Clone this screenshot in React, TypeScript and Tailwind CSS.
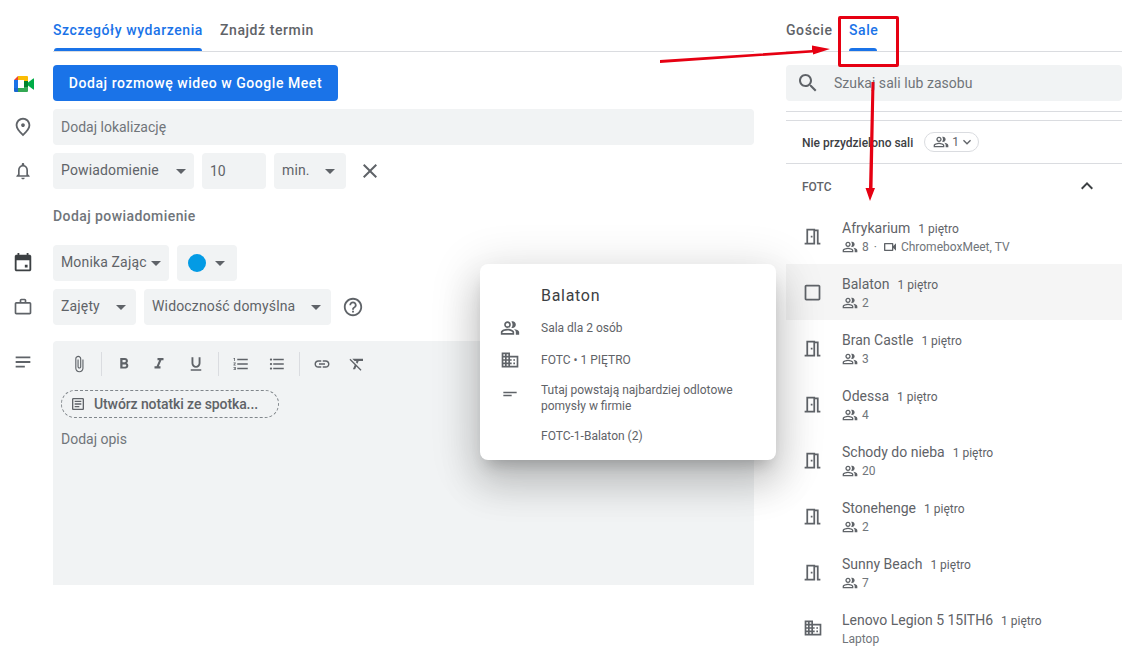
import type { ReactNode } from 'react'

function Icon({ d, className = 'w-6 h-6 fill-[#5f6368]' }: { d: string; className?: string }) {
  return (
    <svg viewBox="0 0 24 24" className={className}>
      <path d={d} />
    </svg>
  )
}

const place = 'M12 12c-1.1 0-2-.9-2-2s.9-2 2-2 2 .9 2 2-.9 2-2 2zm6-1.8C18 6.57 15.35 4 12 4s-6 2.57-6 6.2c0 2.34 1.95 5.44 6 9.14 4.05-3.7 6-6.8 6-9.14zM12 2c4.2 0 8 3.22 8 8.2 0 3.32-2.67 7.25-8 11.8-5.33-4.55-8-8.48-8-11.8C4 5.22 7.8 2 12 2z'
const bell = 'M12 22c1.1 0 2-.9 2-2h-4c0 1.1.9 2 2 2zm6-6v-5c0-3.07-1.63-5.64-4.5-6.32V4c0-.83-.67-1.5-1.5-1.5s-1.5.67-1.5 1.5v.68C7.64 5.36 6 7.92 6 11v5l-2 2v1h16v-1l-2-2zm-2 1H8v-6c0-2.48 1.51-4.5 4-4.5s4 2.02 4 4.5v6z'
const calendar = 'M16 1v2H8V1H6v2H5c-1.11 0-1.99.9-1.99 2L3 19c0 1.1.89 2 2 2h14c1.1 0 2-.9 2-2V5c0-1.1-.9-2-2-2h-1V1h-2zm3 18H5V9h14v10zM14 14h3v3h-3z'
const work = 'M14 6V4h-4v2h4zM4 8v11h16V8H4zm16-2c1.11 0 2 .89 2 2v11c0 1.11-.89 2-2 2H4c-1.11 0-2-.89-2-2l.01-11c0-1.11.88-2 1.99-2h4V4c0-1.11.89-2 2-2h4c1.11 0 2 .89 2 2v2h4z'
const subject = 'M4 6h16v2H4zm0 5h16v2H4zm0 5h10v2H4z'
const help = 'M11 18h2v-2h-2v2zm1-16C6.48 2 2 6.48 2 12s4.48 10 10 10 10-4.48 10-10S17.52 2 12 2zm0 18c-4.41 0-8-3.59-8-8s3.59-8 8-8 8 3.59 8 8-3.59 8-8 8zm0-14c-2.21 0-4 1.79-4 4h2c0-1.1.9-2 2-2s2 .9 2 2c0 2-3 1.75-3 5h2c0-2.25 3-2.5 3-5 0-2.21-1.79-4-4-4z'
const close = 'M19 6.41L17.59 5 12 10.59 6.41 5 5 6.41 10.59 12 5 17.59 6.41 19 12 13.41 17.59 19 19 17.59 13.41 12z'
const attach = 'M16.5 6v11.5c0 2.21-1.79 4-4 4s-4-1.79-4-4V5c0-1.38 1.12-2.5 2.5-2.5s2.5 1.12 2.5 2.5v10.5c0 .55-.45 1-1 1s-1-.45-1-1V6H10v9.5c0 1.38 1.12 2.5 2.5 2.5s2.5-1.12 2.5-2.5V5c0-2.21-1.79-4-4-4S7 2.79 7 5v12.5c0 3.04 2.46 5.5 5.5 5.5s5.5-2.46 5.5-5.5V6h-1.5z'
const bold = 'M15.6 10.79c.97-.67 1.65-1.77 1.65-2.79 0-2.26-1.75-4-4-4H7v14h7.04c2.09 0 3.71-1.7 3.71-3.79 0-1.52-.86-2.82-2.15-3.42zM10 6.5h3c.83 0 1.5.67 1.5 1.5s-.67 1.5-1.5 1.5h-3v-3zm3.5 9H10v-3h3.5c.83 0 1.5.67 1.5 1.5s-.67 1.5-1.5 1.5z'
const italic = 'M10 4v3h2.21l-3.42 8H6v3h8v-3h-2.21l3.42-8H18V4z'
const underline = 'M12 17c3.31 0 6-2.69 6-6V3h-2.5v8c0 1.93-1.57 3.5-3.5 3.5S8.5 12.93 8.5 11V3H6v8c0 3.31 2.69 6 6 6zm-7 2v2h14v-2H5z'
const numbered = 'M2 17h2v.5H3v1h1v.5H2v1h3v-4H2v1zm1-9h1V4H2v1h1v3zm-1 3h1.8L2 13.1v.9h3v-1H3.2L5 10.9V10H2v1zm5-6v2h14V5H7zm0 14h14v-2H7v2zm0-6h14v-2H7v2z'
const bulleted = 'M4 10.5c-.83 0-1.5.67-1.5 1.5s.67 1.5 1.5 1.5 1.5-.67 1.5-1.5-.67-1.5-1.5-1.5zm0-6c-.83 0-1.5.67-1.5 1.5S3.17 7.5 4 7.5 5.5 6.83 5.5 6 4.83 4.5 4 4.5zm0 12c-.83 0-1.5.68-1.5 1.5s.68 1.5 1.5 1.5 1.5-.68 1.5-1.5-.67-1.5-1.5-1.5zM7 19h14v-2H7v2zm0-6h14v-2H7v2zm0-8v2h14V5H7z'
const link = 'M3.9 12c0-1.71 1.39-3.1 3.1-3.1h4V7H7c-2.76 0-5 2.24-5 5s2.24 5 5 5h4v-1.9H7c-1.71 0-3.1-1.39-3.1-3.1zM8 13h8v-2H8v2zm9-6h-4v1.9h4c1.71 0 3.1 1.39 3.1 3.1s-1.39 3.1-3.1 3.1h-4V17h4c2.76 0 5-2.24 5-5s-2.24-5-5-5z'
const clear = 'M3.27 5L2 6.27l6.97 6.97L6.5 19h3l1.57-3.66L16.73 21 18 19.73 3.55 5.27 3.27 5zM6 5v.18L8.82 8h2.4l-.72 1.68 2.1 2.1L14.21 8H20V5H6z'
const search = 'M15.5 14h-.79l-.28-.27C15.41 12.59 16 11.11 16 9.5 16 5.91 13.09 3 9.5 3S3 5.91 3 9.5 5.91 16 9.5 16c1.61 0 3.09-.59 4.23-1.57l.27.28v.79l5 4.99L20.49 19l-4.99-5zm-6 0C7.01 14 5 11.99 5 9.5S7.01 5 9.5 5 14 7.01 14 9.5 11.99 14 9.5 14z'
const people = 'M16.67 13.13C18.04 14.06 19 15.32 19 17v3h4v-3c0-2.18-3.57-3.47-6.33-3.87zM15 12c2.21 0 4-1.79 4-4s-1.79-4-4-4c-.47 0-.91.1-1.33.24C14.5 5.27 15 6.58 15 8s-.5 2.73-1.33 3.76c.42.14.86.24 1.33.24zM9 12c2.21 0 4-1.79 4-4s-1.79-4-4-4-4 1.79-4 4 1.79 4 4 4zm0-6c1.1 0 2 .9 2 2s-.9 2-2 2-2-.9-2-2 .9-2 2-2zm0 7c-2.67 0-8 1.34-8 4v3h16v-3c0-2.66-5.33-4-8-4zm6 5H3v-.99C3.2 16.29 6.3 15 9 15s5.8 1.29 6 2z'
const domain = 'M12 7V3H2v18h20V7H12zM6 19H4v-2h2v2zm0-4H4v-2h2v2zm0-4H4V9h2v2zm0-4H4V5h2v2zm4 12H8v-2h2v2zm0-4H8v-2h2v2zm0-4H8V9h2v2zm0-4H8V5h2v2zm10 12h-8v-2h2v-2h-2v-2h2v-2h-2V9h8v10zm-2-8h-2v2h2v-2zm0 4h-2v2h2v-2z'
const door = 'M19 19V4h-4V3H5v16H3v2h12V6h2v15h4v-2h-2zm-6 0H7V5h6v14zm-3-8h2v2h-2z'
const video = 'M15 8v8H5V8h10m1-2H4c-.55 0-1 .45-1 1v10c0 .55.45 1 1 1h12c.55 0 1-.45 1-1v-3.5l4 4v-11l-4 4V7c0-.55-.45-1-1-1z'
const square = 'M19 3H5c-1.1 0-2 .9-2 2v14c0 1.1.9 2 2 2h14c1.1 0 2-.9 2-2V5c0-1.1-.9-2-2-2zm0 16H5V5h14v14z'
const expandLess = 'M12 8l-6 6 1.41 1.41L12 10.83l4.59 4.58L18 14z'
const expandMore = 'M16.59 8.59L12 13.17 7.41 8.59 6 10l6 6 6-6z'
const article = 'M19 5v14H5V5h14m0-2H5c-1.1 0-2 .9-2 2v14c0 1.1.9 2 2 2h14c1.1 0 2-.9 2-2V5c0-1.1-.9-2-2-2zM14 17H7v-2h7v2zm3-4H7v-2h10v2zm0-4H7V7h10v2z'

function MeetLogo() {
  return (
    <svg viewBox="0 0 20 16" className="w-[20px] h-[16px]">
      <path d="M4 0h9a1 1 0 0 1 1 1v4h-4V4H4z" fill="#fbbc04" />
      <path d="M4 0v4H0z" fill="#ea4335" />
      <path d="M0 4h4v8H0z" fill="#1a73e8" />
      <path d="M0 12h4v4H1a1 1 0 0 1-1-1z" fill="#1967d2" />
      <path d="M4 12h6v-1h4v4a1 1 0 0 1-1 1H4z" fill="#34a853" />
      <path d="M10 5h4v6h-4z" fill="#00832d" />
      <path d="M14 6.5L19.3 2.4a.45.45 0 0 1 .7.4v10.4a.45.45 0 0 1-.7.4L14 9.5z" fill="#00ac47" />
    </svg>
  )
}

function Caret() {
  return <span className="w-0 h-0 border-x-[5px] border-x-transparent border-t-[5px] border-t-[#5f6368]" />
}

function Select({ label, className }: { label: ReactNode; className: string }) {
  return (
    <div className={`h-9 bg-[#f1f3f4] rounded flex items-center justify-between pl-2 text-[14px] tracking-[.15px] text-[#5f6368] ${className}`}>
      <span className="pb-[2px]">{label}</span>
      <Caret />
    </div>
  )
}

function FormRow({ icon, children, className = '' }: { icon: ReactNode; children: ReactNode; className?: string }) {
  return (
    <div className={`flex items-center ${className}`}>
      <div className="w-[53px] pl-[11px] shrink-0 flex items-center">{icon}</div>
      {children}
    </div>
  )
}

function Capacity({ n }: { n: string }) {
  return (
    <>
      <Icon d={people} className="w-4 h-4 fill-[#5f6368]" />
      <span className="ml-1">{n}</span>
    </>
  )
}

const rooms = [
  { name: 'Afrykarium', n: '8', extra: true },
  { name: 'Balaton', n: '2', hover: true },
  { name: 'Bran Castle', n: '3' },
  { name: 'Odessa', n: '4' },
  { name: 'Schody do nieba', n: '20' },
  { name: 'Stonehenge', n: '2' },
  { name: 'Sunny Beach', n: '7' },
]

function RoomRow({ name, icon, children, hover }: { name: string; icon: ReactNode; children: ReactNode; hover?: boolean }) {
  return (
    <div className={`h-14 flex items-center pl-[15px] ${hover ? 'bg-[#f5f5f5]' : ''}`}>
      <div className="w-[41px] shrink-0 pl-[1px]">{icon}</div>
      <div className="pt-[2px]">
        <div className="flex items-baseline h-[20px] text-[14px] text-[#5f6368]">
          {name}
          <span className="ml-[8px] text-[12px]">1 piętro</span>
        </div>
        <div className="flex items-center h-[18px] text-[12px] text-[#70757a]">{children}</div>
      </div>
    </div>
  )
}

function ToolIcon({ d }: { d: string }) {
  return <Icon d={d} className="w-[18px] h-[18px] fill-[#5f6368]" />
}

function ToolDivider() {
  return <span className="w-px h-6 bg-[#dadce0] mx-[13px]" />
}

export default function App() {
  return (
    <div className="relative w-[1142px] h-[662px] overflow-hidden bg-white font-['Roboto',sans-serif]">
      <div className="flex">
        <div className="w-[754px] shrink-0">
          <div className="h-[52px] ml-[53px] border-b border-[#dadce0] flex gap-[17px] text-[14px] font-medium tracking-[.58px]">
            <div className="relative pt-[20px] w-[150px] whitespace-nowrap text-[#1a73e8]">
              Szczegóły wydarzenia
              <span className="absolute left-[1px] right-[1px] bottom-0 h-[3px] rounded-t-[3px] bg-[#1a73e8]" />
            </div>
            <div className="pt-[20px] text-[#5f6368]">Znajdź termin</div>
          </div>

          <FormRow icon={<span className="ml-[3px] pt-[1px]"><MeetLogo /></span>} className="mt-[13px]">
            <div className="w-[285px] h-9 rounded bg-[#1a73e8] text-white text-[14px] font-medium tracking-[.55px] flex items-center justify-center">
              Dodaj rozmowę wideo w Google Meet
            </div>
          </FormRow>
          <FormRow icon={<Icon d={place} className="w-[22px] h-[22px] ml-[1px] fill-[#5f6368]" />} className="mt-2">
            <div className="flex-1 h-9 rounded bg-[#f1f3f4] flex items-center px-2 text-[14px] text-[#70757a]">
              Dodaj lokalizację
            </div>
          </FormRow>
          <FormRow icon={<Icon d={bell} className="w-5 h-5 ml-[2px] fill-[#5f6368]" />} className="mt-2">
            <div className="flex gap-2 items-center">
              <Select label="Powiadomienie" className="w-[141px] pr-[8px]" />
              <div className="w-16 h-9 rounded bg-[#f1f3f4] flex items-center px-2 text-[14px] text-[#5f6368]">10</div>
              <Select label="min." className="w-[72px] pr-[11px]" />
              <Icon d={close} className="w-6 h-6 ml-[4px] fill-[#5f6368]" />
            </div>
          </FormRow>
          <div className="ml-[53px] mt-[18px] h-[18px] leading-[18px] text-[14px] font-medium tracking-[.42px] text-[#70757a]">
            Dodaj powiadomienie
          </div>
          <FormRow icon={<Icon d={calendar} className="w-[22px] h-[22px] ml-[1px] fill-[#3c4043]" />} className="mt-[20px]">
            <div className="flex gap-2">
              <Select label="Monika Zając" className="w-[116px] pr-[8px]" />
              <div className="w-[60px] h-9 rounded bg-[#f1f3f4] flex items-center pl-[11px] gap-[9px]">
                <span className="w-[18px] h-[18px] rounded-full bg-[#039be5]" />
                <Caret />
              </div>
            </div>
          </FormRow>
          <FormRow icon={<Icon d={work} className="w-[20px] h-[20px] ml-[2px] fill-[#5f6368]" />} className="mt-2">
            <div className="flex gap-2 items-center">
              <Select label="Zajęty" className="w-[83px] pr-[10px]" />
              <Select label="Widoczność domyślna" className="w-[187px] pr-[10px]" />
              <Icon d={help} className="w-[22px] h-[22px] ml-[3px] fill-[#5f6368]" />
            </div>
          </FormRow>

          <div className="flex mt-4">
            <div className="w-[53px] pl-[12px] pt-[10px] shrink-0">
              <Icon d={subject} className="w-[22px] h-[22px] fill-[#5f6368]" />
            </div>
            <div className="flex-1 h-[244px] bg-[#f1f3f4] rounded-t pl-2 pt-[14px]">
              <div className="flex items-center h-[18px] pl-[9px]">
                <ToolIcon d={attach} />
                <ToolDivider />
                <ToolIcon d={bold} />
                <span className="w-[17px]" />
                <ToolIcon d={italic} />
                <span className="w-[19px]" />
                <ToolIcon d={underline} />
                <ToolDivider />
                <ToolIcon d={numbered} />
                <span className="w-[18px]" />
                <ToolIcon d={bulleted} />
                <ToolDivider />
                <ToolIcon d={link} />
                <span className="w-[17px]" />
                <ToolIcon d={clear} />
              </div>
              <div className="mt-[17px] w-[218px] h-7 rounded-full border border-dashed border-[#80868b] flex items-center pl-[8px] text-[#5f6368]">
                <Icon d={article} className="w-[16px] h-[16px] fill-[#5f6368]" />
                <span className="ml-2 text-[14px] font-medium tracking-[-.1px]">Utwórz notatki ze spotka...</span>
              </div>
              <div className="mt-[11px] text-[14px] text-[#70757a]">Dodaj opis</div>
            </div>
          </div>
        </div>

        <div className="w-[336px] ml-[32px] shrink-0">
          <div className="h-[52px] border-b border-[#dadce0] flex text-[14px] font-medium tracking-[.58px]">
            <div className="pt-[20px] w-[63px] text-[#5f6368]">Goście</div>
            <div className="relative pt-[20px] w-[28px] whitespace-nowrap text-[#1a73e8]">
              Sale
              <span className="absolute left-0 right-0 bottom-0 h-[3px] rounded-t-[3px] bg-[#1a73e8]" />
            </div>
          </div>
          <div className="mt-[13px] h-9 rounded bg-[#f1f3f4] flex items-center pl-[10px] text-[14px] tracking-[.05px] text-[#70757a]">
            <Icon d={search} className="w-6 h-6 fill-[#5f6368]" />
            <span className="ml-[14px]">Szukaj sali lub zasobu</span>
          </div>
          <div className="mt-[10px] border-t border-[#dadce0]" />
          <div className="mt-2 border-t border-[#dadce0]" />
          <div className="h-[43px] border-b border-[#dadce0] flex items-center pl-4 text-[12px] font-medium text-[#3c4043]">
            <span className="pt-[1px]">Nie przydzielono sali</span>
            <div className="ml-[11px] w-[55px] h-5 rounded-full border border-[#dadce0] flex items-center pl-[8px] text-[#5f6368] font-normal">
              <Icon d={people} className="w-4 h-4 fill-[#5f6368]" />
              <span className="ml-[3px]">1</span>
              <Icon d={expandMore} className="w-4 h-4 fill-[#5f6368]" />
            </div>
          </div>
          <div className="h-[44px] flex items-center justify-between pl-4 pr-[23px] text-[12px] font-medium text-[#5f6368]">
            <span className="pt-[1px]">FOTC</span>
            <Icon d={expandLess} className="w-6 h-6 fill-[#3c4043]" />
          </div>
          {rooms.map((r) => (
            <RoomRow
              key={r.name}
              name={r.name}
              hover={r.hover}
              icon={<Icon d={r.hover ? square : door} className="w-[21px] h-[21px] fill-[#5f6368]" />}
            >
              <Capacity n={r.n} />
              {r.extra && (
                <>
                  <span className="mx-[5px]">·</span>
                  <Icon d={video} className="w-4 h-4 fill-[#5f6368]" />
                  <span className="ml-[3px]">ChromeboxMeet, TV</span>
                </>
              )}
            </RoomRow>
          ))}
          <RoomRow name="Lenovo Legion 5 15ITH6" icon={<Icon d={domain} className="w-5 h-5 ml-[1px] fill-[#5f6368]" />}>
            Laptop
          </RoomRow>
        </div>
      </div>

      {/* room details card */}
      <div className="absolute left-[480px] top-[264px] w-[296px] h-[196px] bg-white rounded-lg shadow-[0_24px_38px_3px_rgba(0,0,0,.14),0_9px_46px_8px_rgba(0,0,0,.12),0_11px_15px_-7px_rgba(0,0,0,.2)] pl-[20px] pt-[20px] text-[12px] text-[#5f6368]">
        <div className="pl-[41px] h-6 leading-6 text-[16px] tracking-[.7px] text-[#3c4043]">Balaton</div>
        <div className="flex items-center mt-[12px] h-4">
          <div className="w-[41px]"><Icon d={people} className="w-5 h-5 fill-[#5f6368]" /></div>
          Sala dla 2 osób
        </div>
        <div className="flex items-center mt-4 h-4">
          <div className="w-[41px]"><Icon d={domain} className="w-5 h-5 fill-[#5f6368]" /></div>
          FOTC • 1 PIĘTRO
        </div>
        <div className="flex mt-[14px]">
          <div className="w-[41px] pt-[1px]"><Icon d="M4 10.5h16v1.8H4zm0 3.7h10V16H4z" className="w-5 h-5 fill-[#5f6368]" /></div>
          <div className="leading-4">Tutaj powstają najbardziej odlotowe<br />pomysły w firmie</div>
        </div>
        <div className="pl-[41px] mt-[14px] h-4 leading-4">FOTC-1-Balaton (2)</div>
      </div>

      {/* red annotations */}
      <div className="absolute left-[838px] top-[16px] w-[61px] h-[51px] rounded-[2px] border-[3px] border-[#e60012]" />
      <svg className="absolute inset-0 w-[1142px] h-[662px] pointer-events-none">
        <path d="M660 60 L812 50 L812 45.5 L830 49 L813 54.5 L813 52.5 L660 63z" fill="#e60012" />
        <path d="M871.5 82 L874.5 82 L872.5 188 L875 188 L870 201 L865.5 188 L869 188z" fill="#e60012" />
      </svg>
    </div>
  )
}
